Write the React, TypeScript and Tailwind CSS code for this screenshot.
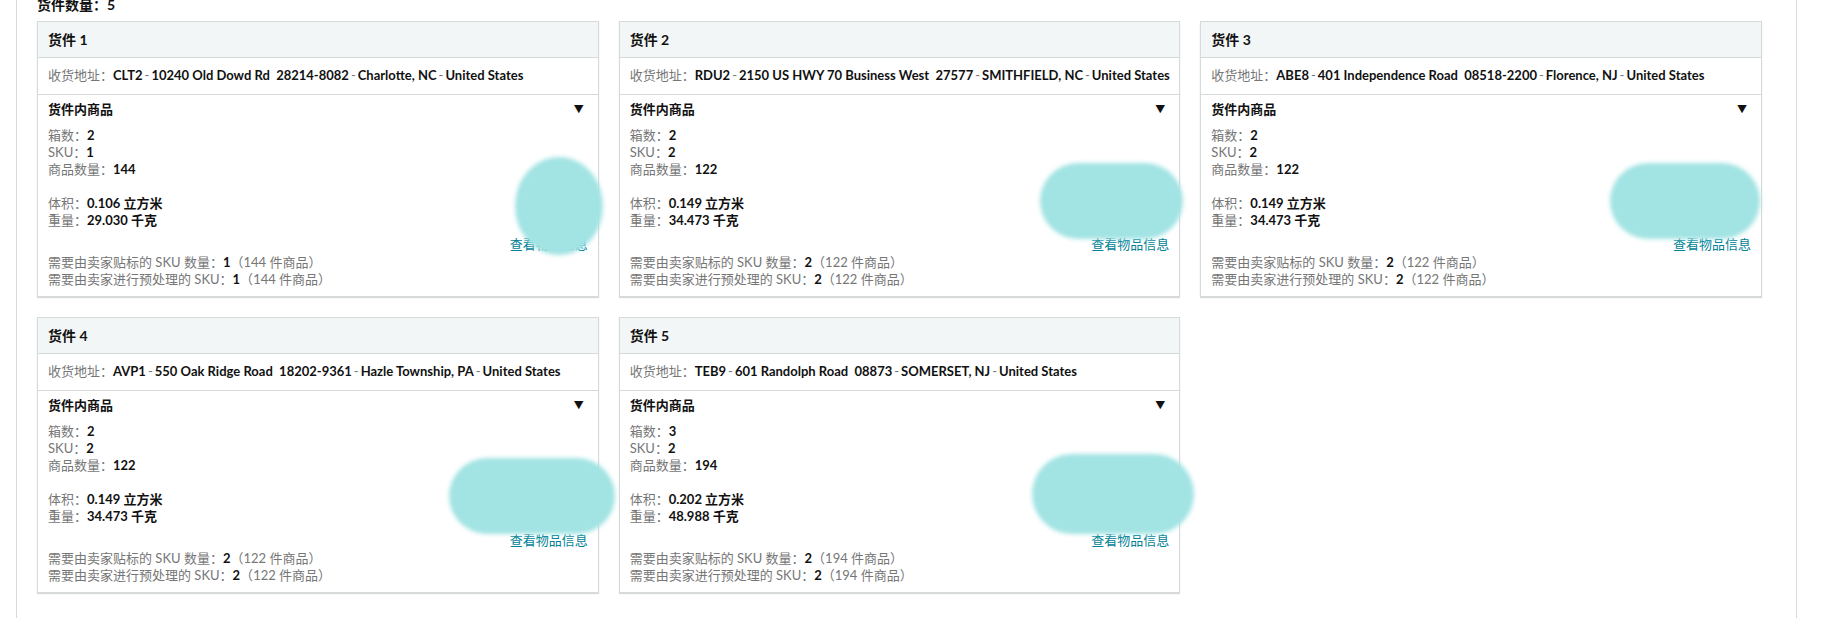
import React from "react";

type Shipment = {
  id: number;
  fc: string;
  street: string;
  zip: string;
  city: string;
  state: string;
  boxes: number;
  skus: number;
  units: number;
  volume: string;
  weight: string;
  labelSkus: number;
  prepSkus: number;
  blob: string;
};

const shipments: Shipment[] = [
  {
    id: 1, fc: "CLT2", street: "10240 Old Dowd Rd", zip: "28214-8082", city: "Charlotte", state: "NC",
    boxes: 2, skus: 1, units: 144, volume: "0.106", weight: "29.030", labelSkus: 1, prepSkus: 1,
    blob: "left-[477px] top-[135px] w-[88px] h-[98px] rounded-[50%]",
  },
  {
    id: 2, fc: "RDU2", street: "2150 US HWY 70 Business West", zip: "27577", city: "SMITHFIELD", state: "NC",
    boxes: 2, skus: 2, units: 122, volume: "0.149", weight: "34.473", labelSkus: 2, prepSkus: 2,
    blob: "left-[420px] top-[141px] w-[143px] h-[76px] rounded-full",
  },
  {
    id: 3, fc: "ABE8", street: "401 Independence Road", zip: "08518-2200", city: "Florence", state: "NJ",
    boxes: 2, skus: 2, units: 122, volume: "0.149", weight: "34.473", labelSkus: 2, prepSkus: 2,
    blob: "left-[409px] top-[141px] w-[150px] h-[76px] rounded-full",
  },
  {
    id: 4, fc: "AVP1", street: "550 Oak Ridge Road", zip: "18202-9361", city: "Hazle Township", state: "PA",
    boxes: 2, skus: 2, units: 122, volume: "0.149", weight: "34.473", labelSkus: 2, prepSkus: 2,
    blob: "left-[411px] top-[140px] w-[166px] h-[76px] rounded-full",
  },
  {
    id: 5, fc: "TEB9", street: "601 Randolph Road", zip: "08873", city: "SOMERSET", state: "NJ",
    boxes: 3, skus: 2, units: 194, volume: "0.202", weight: "48.988", labelSkus: 2, prepSkus: 2,
    blob: "left-[412px] top-[136px] w-[162px] h-[80px] rounded-full",
  },
];

const Dash = () => <span className="text-[#767676] font-normal mx-[2px]">-</span>;

const ShipmentCard = ({ s }: { s: Shipment }) => (
  <div className="relative bg-white border border-[#d5dbdb] shadow-[0_1px_1px_rgba(0,0,0,0.15)]">
    {/* header */}
    <div className="h-[36px] flex items-center px-[10px] bg-[#f3f6f6] border-b border-[#d5dbdb] text-[14px] font-bold text-[#111]">
      货件 {s.id}
    </div>

    {/* address */}
    <div className="h-[37px] flex items-center px-[10px] border-b border-[#d5dbdb] text-[13px] whitespace-nowrap">
      <span className="text-[#767676]">收货地址：</span>
      <span className="font-bold text-[#111]">
        {s.fc}
        <Dash />
        {s.street}&nbsp; {s.zip}
        <Dash />
        {s.city}, {s.state}
        <Dash />
        United States
      </span>
    </div>

    {/* contents */}
    <div className="px-[10px] pt-[5px] pb-[8px] text-[13px] leading-[17px]">
      <div className="flex items-center justify-between h-[18px]">
        <span className="font-bold text-[#111]">货件内商品</span>
        <span className="text-[10px] text-[#111] mr-[4px]">▼</span>
      </div>

      <div className="mt-[9px]">
        <div><span className="text-[#767676]">箱数：</span><b className="text-[#111]">{s.boxes}</b></div>
        <div><span className="text-[#767676]">SKU：</span><b className="text-[#111]">{s.skus}</b></div>
        <div><span className="text-[#767676]">商品数量：</span><b className="text-[#111]">{s.units}</b></div>
      </div>

      <div className="mt-[17px]">
        <div><span className="text-[#767676]">体积：</span><b className="text-[#111]">{s.volume} 立方米</b></div>
        <div><span className="text-[#767676]">重量：</span><b className="text-[#111]">{s.weight} 千克</b></div>
      </div>

      <div className="mt-[7px] flex justify-end">
        <a href="#" className="text-[#008296] hover:underline">查看物品信息</a>
      </div>

      <div className="mt-[1px] text-[#767676]">
        <div>需要由卖家贴标的 SKU 数量：<b className="text-[#111]">{s.labelSkus}</b>（{s.units} 件商品）</div>
        <div>需要由卖家进行预处理的 SKU：<b className="text-[#111]">{s.prepSkus}</b>（{s.units} 件商品）</div>
      </div>
    </div>

    {/* redaction blob */}
    <div className={`absolute bg-[#a2e3e3] blur-[2px] ${s.blob}`} />
  </div>
);

export default function App() {
  return (
    <div className="h-[623px] overflow-hidden bg-white font-['Lato','Noto_Sans_CJK_SC',sans-serif]">
      <div className="ml-[16px] w-[1781px] h-full border-x border-[#d5dbdb] pl-[20px] pr-[34px]">
        <div className="-mt-[5px] h-[20px] leading-[20px] text-[14px] font-bold text-[#111]">货件数量：5</div>
        <div className="mt-[6px] grid grid-cols-3 gap-x-[20px] gap-y-[20px]">
          {shipments.map((s) => (
            <ShipmentCard key={s.id} s={s} />
          ))}
        </div>
      </div>
    </div>
  );
}
